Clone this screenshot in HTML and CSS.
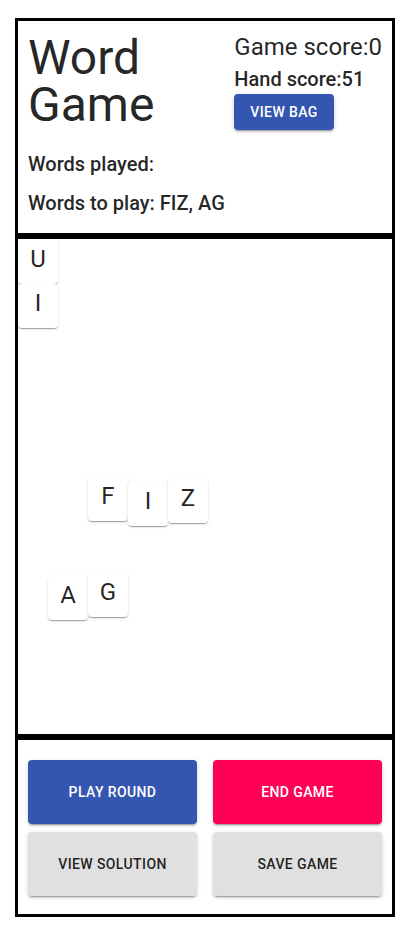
FILE: index.html
```html
<!DOCTYPE html>
<html lang="en">
<head>
<meta charset="utf-8">
<title>Word Game</title>
<link rel="stylesheet" href="styles.css">
</head>
<body>
<div class="app">
  <section class="panel header">
    <div class="top-row">
      <h1 class="title"><span class="title-line">Word</span><span class="title-line">Game</span></h1>
      <div class="scores">
        <div class="game-score">Game score:0</div>
        <div class="hand-score">Hand score:51</div>
        <button class="btn btn-primary btn-small">View bag</button>
      </div>
    </div>
    <div class="words">Words played:</div>
    <div class="words words-next">Words to play: FIZ, AG</div>
  </section>
  <section class="panel board">
    <div class="tile" style="left:0px;top:1px">U</div>
    <div class="tile" style="left:0px;top:45px">I</div>
    <div class="tile" style="left:70px;top:238px">F</div>
    <div class="tile" style="left:110px;top:243px">I</div>
    <div class="tile" style="left:150px;top:240px">Z</div>
    <div class="tile" style="left:30px;top:337px">A</div>
    <div class="tile" style="left:70px;top:334px">G</div>
  </section>
  <section class="panel controls">
    <button class="btn btn-primary btn-big">Play round</button>
    <button class="btn btn-secondary btn-big">End game</button>
    <button class="btn btn-default btn-big">View solution</button>
    <button class="btn btn-default btn-big">Save game</button>
  </section>
</div>
</body>
</html>
```
FILE: styles.css
```css
* { box-sizing: border-box; }
html, body { margin: 0; padding: 0; background: #fff; }
body {
  font-family: Roboto, "Noto Sans", "Liberation Sans", sans-serif;
  color: rgba(0, 0, 0, 0.87);
}
.app {
  width: 380px;
  margin: 18px 0 0 15px;
  display: flex;
  flex-direction: column;
}
.panel {
  border: 3px solid #000;
}
.header {
  padding: 13px 10px 19px 10px;
  height: 218px;
}
.top-row {
  display: flex;
  justify-content: space-between;
  align-items: flex-start;
}
.title {
  margin: 0;
  font-size: 48px;
  line-height: 47px;
  font-weight: 400;
  display: flex;
  flex-direction: column;
}
.title-line { display: block; }
.scores {
  display: flex;
  flex-direction: column;
  align-items: flex-start;
}
.game-score {
  font-size: 24px;
  line-height: 26px;
}
.hand-score {
  font-size: 20px;
  line-height: 24px;
  font-weight: 500;
  margin-top: 7px;
}
.words {
  font-size: 20px;
  line-height: 24px;
  font-weight: 500;
  margin-top: 22px;
}
.words-next { margin-top: 15px; }
.board {
  position: relative;
  height: 501px;
}
.tile {
  position: absolute;
  width: 40px;
  height: 44px;
  background: #fff;
  border-radius: 4px;
  text-align: center;
  font-size: 24px;
  line-height: 28px;
  padding-top: 5px;
  color: rgba(0, 0, 0, 0.87);
  box-shadow: 0px 2px 1px -1px rgba(0,0,0,0.2), 0px 1px 1px 0px rgba(0,0,0,0.14), 0px 1px 3px 0px rgba(0,0,0,0.12);
}
.controls {
  height: 180px;
  padding: 20px 10px 18px 10px;
  display: grid;
  grid-template-columns: 1fr 1fr;
  column-gap: 16px;
  row-gap: 8px;
  align-content: start;
}
.btn {
  font-family: Roboto, "Noto Sans", "Liberation Sans", sans-serif;
  font-size: 14px;
  font-weight: 500;
  letter-spacing: 0.02857em;
  text-transform: uppercase;
  border: none;
  border-radius: 4px;
  cursor: pointer;
  box-shadow: 0px 3px 1px -2px rgba(0,0,0,0.2), 0px 2px 2px 0px rgba(0,0,0,0.14), 0px 1px 5px 0px rgba(0,0,0,0.12);
}
.btn-small {
  margin-top: 3px;
  height: 36px;
  padding: 0 16px;
}
.btn-big {
  height: 64px;
  padding: 0 8px;
}
.btn-primary { background: #3556b0; color: #fff; }
.btn-secondary { background: #ff0057; color: #fff; }
.btn-default { background: #e0e0e0; color: rgba(0, 0, 0, 0.87); }
```
